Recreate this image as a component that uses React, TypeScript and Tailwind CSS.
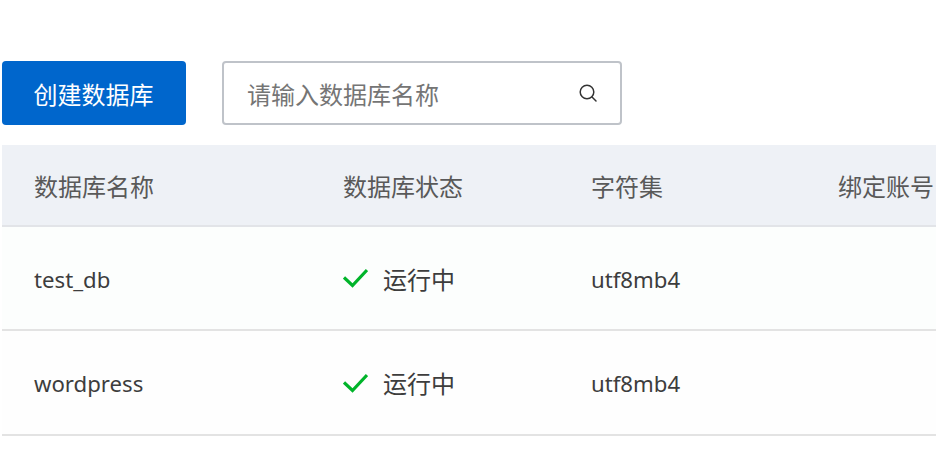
const font = { fontFamily: '"Noto Sans", "Noto Sans CJK SC", sans-serif' };

const rows = [
  { name: 'test_db', height: 'h-[104px]', bg: 'bg-[#fcfefd]' },
  { name: 'wordpress', height: 'h-[105px]', bg: 'bg-[#fefefe]' },
];

export default function App() {
  return (
    <div className="h-[468px] w-[936px] overflow-hidden bg-white pl-[2px] pt-[61px]" style={font}>
      <div className="flex h-16 items-stretch gap-9">
        <button className="w-[184px] rounded bg-[#0066cc] pt-[3px] pr-[1px] text-center text-2xl text-white">创建数据库</button>
        <div className="flex w-[400px] items-center justify-between rounded border-2 border-[#bfc3c9] bg-white pl-[23px] pr-[22px]">
          <span className="pt-[3px] text-2xl text-[#757575]">请输入数据库名称</span>
          <svg width="20" height="20" viewBox="0 0 20 20" fill="none" stroke="#333" strokeWidth="1.5" strokeLinecap="round">
            <circle cx="9" cy="9" r="6.8" />
            <path d="M14 14l4 4" />
          </svg>
        </div>
      </div>

      <div className="mt-5 w-[934px] text-2xl">
        <div className="flex h-[82px] items-center border-b-2 border-[#e2e4e8] bg-[#eef1f6] pt-[3px] text-[#595959]">
          <div className="w-[341px] shrink-0 pl-8">数据库名称</div>
          <div className="w-[248px] shrink-0">数据库状态</div>
          <div className="w-[247px] shrink-0">字符集</div>
          <div className="shrink-0 whitespace-nowrap">绑定账号</div>
        </div>
        {rows.map((row) => (
          <div key={row.name} className={`flex items-center border-b-2 border-[#e3e3e3] text-[#3d3d3d] ${row.height} ${row.bg}`}>
            <div className="w-[341px] shrink-0 pl-8 pt-[3px] text-[22.2px]">{row.name}</div>
            <div className="flex w-[248px] shrink-0 items-center gap-[15px]">
              <svg width="25" height="20" viewBox="0 0 25 20" fill="none" stroke="#00b42a" strokeWidth="3.2">
                <path d="M1 9.500l8.500 8L24 2" />
              </svg>
              <span className="pt-[3px]">运行中</span>
            </div>
            <div className="shrink-0 pt-[3px] text-[22.2px]">utf8mb4</div>
          </div>
        ))}
      </div>
    </div>
  );
}
